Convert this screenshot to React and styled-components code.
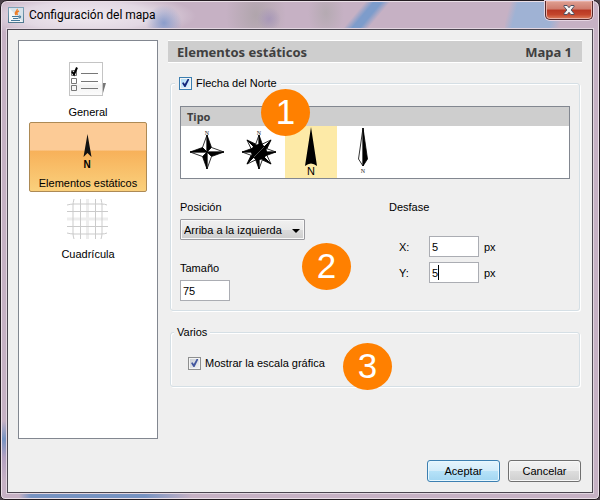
import React, { useState } from "react";
import styled, { createGlobalStyle } from "styled-components";

const ARROWS = ["cross", "star", "arrow", "needle"];

const NAMES = {
  cross: "Rosa de cuatro puntas",
  star: "Rosa de ocho puntas",
  arrow: "Flecha",
  needle: "Aguja",
};

function JavaIcon() {
  return (
    <svg width="16" height="16" viewBox="0 0 16 16" aria-hidden="true">
      <defs>
        <linearGradient id="javaBg" x1="0" y1="0" x2="0" y2="1">
          <stop offset="0" stopColor="#7fa3b8" />
          <stop offset="1" stopColor="#50788f" />
        </linearGradient>
      </defs>
      <rect x="0.5" y="0.5" width="15" height="15" fill="#f3f6f8" stroke="url(#javaBg)" />
      <path d="M1 1h14v14z" fill="#c9dae4" opacity="0.7" />
      <path d="M9 2c1.5 2-3.5 3-1 6M11 4c-2.5 1-2.5 2-1.5 4" fill="none" stroke="#ef7d26" strokeWidth="1.4" />
      <path d="M4 9.5h7M5 11.5h5M11 9.2c2.2-.5 2.2 1.6-.6 2M3 13.5h9" fill="none" stroke="#45799b" strokeWidth="1.2" />
    </svg>
  );
}

function ListIcon() {
  return (
    <svg width="42" height="42" viewBox="0 0 42 42" aria-hidden="true">
      <defs>
        <linearGradient id="sheet" x1="0" y1="0" x2="0" y2="1">
          <stop offset="0.6" stopColor="#fff" />
          <stop offset="0.7" stopColor="#f3f3f3" />
          <stop offset="1" stopColor="#fcfcfc" />
        </linearGradient>
      </defs>
      <path d="M36 26h3l-3 10z" fill="#777" />
      <rect x="2.5" y="5.5" width="33" height="33" fill="url(#sheet)" stroke="#c4c4c4" />
      <g fill="none" stroke="#777">
        <path d="M4.5 13.5h5v5h-5zM4.5 21.5h5v5h-5zM4.5 28.5h5v5h-5z" />
        <path d="M14 16.5h17M14 24.5h17M14 31.5h17" />
      </g>
      <path d="M5 14.5L7 17.500 10 10.500" fill="none" stroke="#000" strokeWidth="2" />
    </svg>
  );
}

function NorthIcon() {
  return (
    <svg width="42" height="42" viewBox="0 0 42 42" aria-hidden="true">
      <path d="M20.5 6L24.5 29 20.5 25 16.5 29z" fill="#111" />
      <text x="20" y="40" textAnchor="middle" fontFamily="Liberation Sans, sans-serif" fontWeight="700" fontSize="10">
        N
      </text>
    </svg>
  );
}

function GridIcon() {
  return (
    <svg width="42" height="42" viewBox="0 0 42 42" aria-hidden="true">
      <path d="M20.5 0v40M0 20h41" stroke="#ededed" strokeWidth="3" />
      <path
        d="M7 0q-1 4-1 6v28q0 3 1 6M13.5 0v40M28.5 0v40M34 0q1 4 1 6v28q0 3-1 6M0 6q4-1 7-1h27q4 0 6 1M0 12.5h41M0 27.5h41M0 34q4 1 7 1h27q4 0 6-1"
        fill="none"
        stroke="#cbcbcb"
      />
    </svg>
  );
}

function SmallN({ y }) {
  return (
    <text x="26" y={y} textAnchor="middle" fontFamily="Liberation Serif, serif" fontSize="6" fill="#222">
      N
    </text>
  );
}

function Point({ angle, length }) {
  return (
    <g transform={`rotate(${angle} 26 26)`} stroke="#000" strokeWidth="0.8">
      <path d={`M26 26L21.5 21.5 26 ${26 - length}z`} fill="#fff" />
      <path d={`M26 26L30.5 21.5 26 ${26 - length}z`} fill="#000" />
    </g>
  );
}

function ArrowDrawing({ kind }) {
  return (
    <svg width="52" height="52" viewBox="0 0 52 52" aria-hidden="true">
      {kind === "cross" && (
        <>
          <SmallN y={9} />
          {[0, 90, 180, 270].map((a) => (
            <Point key={a} angle={a} length={17} />
          ))}
        </>
      )}
      {kind === "star" && (
        <>
          <SmallN y={9} />
          {[45, 135, 225, 315].map((a) => (
            <Point key={a} angle={a} length={17} />
          ))}
          {[0, 90, 180, 270].map((a) => (
            <Point key={a} angle={a} length={17} />
          ))}
          <circle cx="26" cy="26" r="8" fill="#000" />
          <path d="M21 31L31 21" stroke="#999" strokeWidth="0.5" />
        </>
      )}
      {kind === "arrow" && (
        <>
          <path d="M26 1L32 40Q26 35 20 40z" fill="#000" />
          <text x="26" y="49" textAnchor="middle" fontFamily="Liberation Sans, sans-serif" fontSize="11">
            N
          </text>
        </>
      )}
      {kind === "needle" && (
        <>
          <path d="M26 2L21.5 33 26 40z" fill="#fff" stroke="#000" strokeWidth="0.8" />
          <path d="M26 2L30.5 33 26 40z" fill="#000" stroke="#000" strokeWidth="0.8" />
          <SmallN y={47} />
        </>
      )}
    </svg>
  );
}

const SECTIONS = [
  { id: "general", label: "General", Icon: ListIcon },
  { id: "static", label: "Elementos estáticos", Icon: NorthIcon },
  { id: "grid", label: "Cuadrícula", Icon: GridIcon },
];

export default function App() {
  const [section, setSection] = useState("static");
  const [arrow, setArrow] = useState("arrow");
  const [form, setForm] = useState({
    north: true,
    scale: true,
    position: "tl",
    size: "75",
    x: "5",
    y: "5",
  });
  const handleChange = (e) => {
    const { name, type, checked, value } = e.target;
    setForm({ ...form, [name]: type === "checkbox" ? checked : value });
  };

  return (
    <Frame>
      <GlobalStyle />
      <TitleBar>
        <JavaIcon />
        <Title>Configuración del mapa</Title>
        <CloseButton aria-label="Cerrar">
          <svg width="12" height="10" viewBox="0 0 12 10" aria-hidden="true">
            <path
              d="M1 .5h3.2L6 2.7 7.8 .5H11v1L8.2 5 11 8.5v1H7.8L6 7.3 4.2 9.5H1v-1L3.8 5 1 1.5z"
              fill="#f4f4f4"
              stroke="#4d5062"
            />
          </svg>
        </CloseButton>
      </TitleBar>
      <Client>
        <Body>
          <Sidebar>
            {SECTIONS.map(({ id, label, Icon }) => (
              <SectionButton key={id} $active={section === id} onClick={() => setSection(id)}>
                <Icon />
                {label}
              </SectionButton>
            ))}
          </Sidebar>
          <Main>
            <Heading>
              <h1>Elementos estáticos</h1>
              <span>Mapa 1</span>
            </Heading>
            <Group>
              <GroupTitle $check>
                <CheckLabel>
                  <Checkbox name="north" checked={form.north} onChange={handleChange} $hot />
                  Flecha del Norte
                </CheckLabel>
              </GroupTitle>
              <TypeList role="radiogroup" aria-labelledby="tipo">
                <TypeHeader id="tipo">Tipo</TypeHeader>
                <TypeRow>
                  {ARROWS.map((kind) => (
                    <TypeOption key={kind} $active={arrow === kind}>
                      <input
                        type="radio"
                        name="arrow"
                        aria-label={NAMES[kind]}
                        checked={arrow === kind}
                        onChange={() => setArrow(kind)}
                      />
                      <ArrowDrawing kind={kind} />
                    </TypeOption>
                  ))}
                </TypeRow>
                <Badge $left={80} $top={-18}>1</Badge>
              </TypeList>
              <Columns>
                <Column>
                  <label htmlFor="position">Posición</label>
                  <SelectBox>
                    <select id="position" name="position" value={form.position} onChange={handleChange}>
                      <option value="tl">Arriba a la izquierda</option>
                      <option value="tr">Arriba a la derecha</option>
                      <option value="bl">Abajo a la izquierda</option>
                      <option value="br">Abajo a la derecha</option>
                    </select>
                    <svg width="8" height="4" viewBox="0 0 8 4" aria-hidden="true">
                      <path d="M0 0h8L4 4z" />
                    </svg>
                  </SelectBox>
                  <SizeLabel htmlFor="size">Tamaño</SizeLabel>
                  <TextInput id="size" name="size" value={form.size} onChange={handleChange} />
                  <Badge $left={122} $top={43}>2</Badge>
                </Column>
                <Offsets>
                  <span>Desfase</span>
                  <OffsetRows>
                    <OffsetRow>
                      <label htmlFor="x">X:</label>
                      <TextInput id="x" name="x" value={form.x} onChange={handleChange} />
                      <span>px</span>
                    </OffsetRow>
                    <OffsetRow>
                      <label htmlFor="y">Y:</label>
                      <CaretBox>
                        <TextInput id="y" name="y" value={form.y} onChange={handleChange} />
                        <Caret />
                      </CaretBox>
                      <span>px</span>
                    </OffsetRow>
                  </OffsetRows>
                </Offsets>
              </Columns>
            </Group>
            <Group $second>
              <GroupTitle>Varios</GroupTitle>
              <CheckLabel>
                <Checkbox name="scale" checked={form.scale} onChange={handleChange} />
                Mostrar la escala gráfica
              </CheckLabel>
              <Badge $left={172} $top={4}>3</Badge>
            </Group>
          </Main>
        </Body>
        <Footer>
          <DialogButton $primary>Aceptar</DialogButton>
          <DialogButton>Cancelar</DialogButton>
        </Footer>
      </Client>
    </Frame>
  );
}

const GlobalStyle = createGlobalStyle`
  * {
    box-sizing: border-box;
  }
  body {
    margin: 0;
    background: #4a4048;
    color: #000;
    font: 11px/14px "Liberation Sans", Arial, sans-serif;
  }
  button, input, select {
    font: inherit;
    color: inherit;
  }
`;

const Frame = styled.div`
  display: flex;
  flex-direction: column;
  min-height: 100vh;
  padding: 0 6px 6px;
  border: 1px solid #241c22;
  border-radius: 7px 7px 5px 5px;
  box-shadow: inset 0 0 0 1px #eadfe7;
  background:
    linear-gradient(130deg, transparent 38%, #7d9ccb 47%, #7d9ccb 55%, transparent 64%) 328px 0 / 72px 30px no-repeat,
    linear-gradient(105deg, transparent 8%, #9fb2d4 20%, #9fb2d4 75%, transparent 90%) 504px 0 / 60px 30px no-repeat,
    radial-gradient(circle at 268px 18px, #a898b8 0, transparent 12px),
    radial-gradient(circle at 163px 22px, #8b9dcb 0, transparent 18px),
    radial-gradient(ellipse at 255px 14px, #b0a5ac 0, transparent 30px),
    radial-gradient(ellipse at 325px 12px, #b5aab2 0, transparent 18px),
    radial-gradient(ellipse 110px 24px at 85px 15px, #f0e9f0 0, #e2d8e3 60%, transparent 100%),
    linear-gradient(90deg, transparent 3%, #7793c2 5%, #7793c2 24%, transparent 32%) 0 100% / 100% 8px no-repeat,
    linear-gradient(180deg, transparent 0, #7793c2 30%, #b3a0c0 60%, transparent 100%) 0 420px / 8px 60px no-repeat,
    #c6b1c4;
`;

const TitleBar = styled.header`
  display: flex;
  align-items: center;
  height: 28px;
  padding-left: 1px;
`;

const Title = styled.div`
  flex: 1;
  padding-left: 5px;
  font: 12px/16px Roboto, "Open Sans", sans-serif;
`;

const CloseButton = styled.button`
  display: flex;
  align-items: center;
  justify-content: center;
  align-self: flex-start;
  width: 48px;
  height: 19px;
  padding: 0;
  border: 1px solid #552a2c;
  border-top: 0;
  border-radius: 0 0 5px 5px;
  box-shadow: inset 0 0 0 1px #e9b0a6, 0 0 0 1px #e6d5e2;
  background: linear-gradient(#dfa093 0, #cf7b6c 45%, #b83723 50%, #c4452c 75%, #dd7f5d 100%);
`;

const Client = styled.div`
  display: flex;
  flex: 1;
  flex-direction: column;
  padding: 10px;
  border: 1px solid #4b4650;
  box-shadow: 0 0 0 1px #e2d6e0;
  background: #efefef;
`;

const Body = styled.div`
  display: flex;
  flex: 1;
  gap: 10px;
`;

const Sidebar = styled.nav`
  display: flex;
  flex: 0 0 140px;
  flex-direction: column;
  gap: 1px;
  padding: 10px;
  border: 1px solid #828790;
  background: #fff;
`;

const SectionButton = styled.button`
  display: flex;
  flex-direction: column;
  align-items: center;
  gap: 6px;
  height: 70px;
  padding: 5px 0 0;
  border: 1px solid ${({ $active }) => ($active ? "#ad8a55" : "transparent")};
  border-radius: 2px;
  background: ${({ $active }) =>
    $active ? "linear-gradient(#fccb96 0, #fccb96 40%, #f7b15a 41%, #fad07c 100%)" : "transparent"};
  white-space: nowrap;
`;

const Main = styled.main`
  flex: 1;
  min-width: 0;
`;

const Heading = styled.div`
  display: flex;
  align-items: center;
  justify-content: space-between;
  height: 23px;
  margin-bottom: 13px;
  padding: 0 10px 0 9px;
  border: solid #fff;
  border-width: 1px 0;
  background: #cecece;
  color: #404040;
  font: bold 13px/18px "Noto Sans", "Open Sans", sans-serif;
  h1 {
    margin: 0;
    font: inherit;
  }
`;

const Group = styled.fieldset`
  position: relative;
  min-width: 0;
  margin: ${({ $second }) => ($second ? "14px" : "0")} 2px 0;
  padding: ${({ $second }) => ($second ? "17px 17px 16px" : "16px 9px 9px")};
  border: 1px solid #d5dfe5;
  border-radius: 3px;
  box-shadow: 1px 1px 0 #fff, inset 1px 1px 0 #fff;
`;

const GroupTitle = styled.legend`
  height: 14px;
  margin-left: ${({ $check }) => ($check ? "-5px" : "-14px")};
  padding: 0 ${({ $check }) => ($check ? "4px" : "3px")};
  background: #efefef;
`;

const CheckLabel = styled.label`
  display: flex;
  align-items: center;
  gap: 4px;
`;

const Checkbox = styled.input.attrs({ type: "checkbox" })`
  appearance: none;
  flex: none;
  display: grid;
  place-items: center;
  width: 13px;
  height: 13px;
  margin: 0;
  border: 1px solid ${({ $hot }) => ($hot ? "#3c7fb1" : "#8e8f8f")};
  box-shadow: inset 0 0 0 1px #f4f4f4;
  background: ${({ $hot }) =>
    $hot ? "linear-gradient(135deg, #a9d9f4, #eaf7fe)" : "linear-gradient(135deg, #c6cbd2, #f4f5f6)"};
  &:checked::after {
    content: "";
    width: 7px;
    height: 8px;
    background: ${({ $hot }) => ($hot ? "#15287c" : "#43579f")};
    clip-path: polygon(0 50%, 22% 40%, 40% 62%, 80% 0, 100% 0, 100% 12%, 50% 100%, 34% 100%);
  }
`;

const TypeList = styled.div`
  position: relative;
  border: 1px solid #828790;
  background: #fff;
`;

const TypeHeader = styled.div`
  height: 19px;
  padding-left: 6px;
  background: #cecece;
  color: #404040;
  font: bold 11px/19px "Noto Sans", "Open Sans", sans-serif;
`;

const TypeRow = styled.div`
  display: flex;
`;

const TypeOption = styled.label`
  display: flex;
  width: 52px;
  height: 52px;
  background: ${({ $active }) => ($active ? "#fdeaa7" : "transparent")};
  input {
    appearance: none;
    width: 0;
    height: 0;
    margin: 0;
  }
`;

const Badge = styled.span`
  position: absolute;
  left: ${({ $left }) => $left}px;
  top: ${({ $top }) => $top}px;
  width: 49px;
  height: 47px;
  border-radius: 50%;
  background: #ff8000;
  color: #fff;
  font-size: 35px;
  line-height: 45px;
  text-align: center;
  pointer-events: none;
`;

const Columns = styled.div`
  display: flex;
  padding-top: 21px;
`;

const Column = styled.div`
  position: relative;
  display: flex;
  flex: 0 0 209px;
  flex-direction: column;
  align-items: flex-start;
  gap: 5px;
`;

const SelectBox = styled.div`
  position: relative;
  width: 125px;
  select {
    display: block;
    appearance: none;
    width: 100%;
    height: 21px;
    padding: 0 3px;
    border: 1px solid #9a9a9f;
    border-radius: 1px;
    box-shadow: inset 0 0 0 1px #f8f8f8;
    background: linear-gradient(#f0f0f0 0, #e9e9e9 50%, #dbdbdb 51%, #cecece 100%);
  }
  svg {
    position: absolute;
    right: 5px;
    top: 10px;
    pointer-events: none;
  }
`;

const SizeLabel = styled.label`
  padding-top: 16px;
`;

const TextInput = styled.input`
  display: block;
  width: 50px;
  height: 21px;
  padding: 0 2px;
  border: 1px solid #abadb3;
  background: #fff;
  outline: none;
`;

const Offsets = styled.div`
  flex: 1;
`;

const OffsetRows = styled.div`
  display: grid;
  gap: 5px;
  padding: 22px 0 0 10px;
`;

const OffsetRow = styled.div`
  display: grid;
  grid-template-columns: 30px 50px 1fr;
  align-items: center;
  > span {
    padding-left: 5px;
  }
`;

const CaretBox = styled.div`
  position: relative;
`;

const Caret = styled.span`
  position: absolute;
  left: 9px;
  top: 3px;
  width: 1px;
  height: 15px;
  background: #000;
`;

const Footer = styled.footer`
  display: flex;
  justify-content: flex-end;
  gap: 8px;
  padding: 21px 1px 0 0;
`;

const DialogButton = styled.button`
  width: 73px;
  height: 22px;
  padding: 0;
  border: 1px solid ${({ $primary }) => ($primary ? "#3c7fb1" : "#707070")};
  border-radius: 3px;
  box-shadow: inset 0 0 0 1px ${({ $primary }) => ($primary ? "#e8f8ff" : "#f8f8f8")};
  background: ${({ $primary }) =>
    $primary
      ? "linear-gradient(#e5f4fc 0, #d2ecfa 50%, #b6e2f8 51%, #a2d6f2 100%)"
      : "linear-gradient(#f2f2f2 0, #ebebeb 50%, #dddddd 51%, #cfcfcf 100%)"};
`;
